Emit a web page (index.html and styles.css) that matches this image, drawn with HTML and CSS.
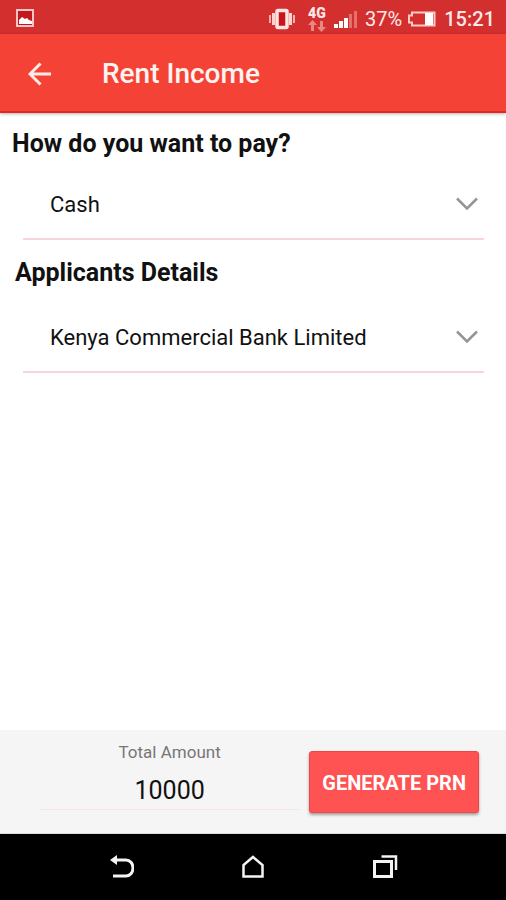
FILE: index.html
```html
<!DOCTYPE html>
<html lang="en">
<head>
<meta charset="utf-8">
<meta name="viewport" content="width=device-width, initial-scale=1">
<title>Rent Income</title>
<link rel="stylesheet" href="styles.css">
</head>
<body>
<div class="status">
  <svg class="status-picture" width="20" height="20" viewBox="0 0 20 20" aria-hidden="true">
    <rect x="1" y="1" width="16" height="16" fill="#c4161c" stroke="#fbc5c5" stroke-width="2"/>
    <path d="M3 15v-4l3-3 3 2 2-1 2 2 3 1v3z" fill="#fff"/>
  </svg>
  <svg class="status-vibrate" width="28" height="22" viewBox="0 0 28 22" aria-hidden="true">
    <rect x="9" y="2.500" width="10" height="17" rx="1" fill="#c4161c" stroke="#ffe3e0" stroke-width="3.500"/>
    <path d="M5.500 5v12M22.500 5v12" stroke="#fbd3d0" stroke-width="3"/>
    <path d="M2 7v8M26 7v8" stroke="#f3b0ae" stroke-width="2"/>
  </svg>
  <div class="network">
    <span class="network-type">4G</span>
    <svg width="18" height="12" viewBox="0 0 18 12" aria-hidden="true">
      <path d="M4.500 0l4.500 5H6v6H3V5H0zM13.500 12L9 7h3V1h3v6h3z" fill="#e98783"/>
    </svg>
  </div>
  <svg class="status-signal" width="24" height="18" viewBox="0 0 24 18" aria-hidden="true">
    <path d="M0 14h4v4H0zM5 11h4v7H5zM10 8h4v10h-4z" fill="#fff"/>
    <path d="M15 4h3v14h-3zM20 1h3v17h-3z" fill="#e4706e"/>
  </svg>
  <span class="battery-level">37%</span>
  <svg class="status-battery" width="28" height="16" viewBox="0 0 28 16" aria-hidden="true">
    <path d="M4 1.500h22.500v13H4v-3H1v-7h3z" fill="none" stroke="#fbc9c7" stroke-width="2"/>
    <path d="M17 2h8v12h-8z" fill="#fff"/>
  </svg>
  <span class="clock">15:21</span>
</div>

<header class="app-bar">
  <button class="back" type="button" aria-label="Back">
    <svg width="24" height="24" viewBox="0 0 24 24" aria-hidden="true">
      <path d="M23 12H2.500M12.500 1.500L2 12l10.500 10.500" fill="none" stroke="#ffece9" stroke-width="3"/>
    </svg>
  </button>
  <h1>Rent Income</h1>
</header>

<main>
  <label class="heading" for="method">How do you want to pay?</label>
  <div class="field">
    <select id="method"><option>Cash</option></select>
    <svg class="chevron" width="22" height="14" viewBox="0 0 22 14" aria-hidden="true"><path d="M1 1.500l10 10 10-10" fill="none" stroke="#959595" stroke-width="2.500"/></svg>
  </div>
  <label class="heading heading-details" for="bank">Applicants Details</label>
  <div class="field">
    <select id="bank"><option>Kenya Commercial Bank Limited</option></select>
    <svg class="chevron" width="22" height="14" viewBox="0 0 22 14" aria-hidden="true"><path d="M1 1.500l10 10 10-10" fill="none" stroke="#959595" stroke-width="2.500"/></svg>
  </div>
</main>

<footer class="summary">
  <div class="total">
    <label for="amount">Total Amount</label>
    <input id="amount" type="text" value="10000">
  </div>
  <button class="generate" type="button">GENERATE PRN</button>
</footer>

<nav class="system-nav">
  <button type="button" aria-label="System back">
    <svg width="26" height="26" viewBox="0 0 26 26" aria-hidden="true">
      <path d="M7 6h11a7 8 0 0 1 0 16H5" fill="none" stroke="#f4f4f4" stroke-width="3"/>
      <path d="M2 6l7-5v10z" fill="#f4f4f4"/>
    </svg>
  </button>
  <button type="button" aria-label="Home">
    <svg width="26" height="26" viewBox="0 0 26 26" aria-hidden="true">
      <path d="M3.500 22.500V11L13 3 22.500 11v11.500z" fill="none" stroke="#f4f4f4" stroke-width="2.500"/>
    </svg>
  </button>
  <button type="button" aria-label="Recent apps">
    <svg width="26" height="26" viewBox="0 0 26 26" aria-hidden="true">
      <path d="M2.500 7.500h17v15h-17z" fill="none" stroke="#f4f4f4" stroke-width="3"/>
      <path d="M9.500 2.500H24V16" fill="none" stroke="#f4f4f4" stroke-width="2.500"/>
    </svg>
  </button>
</nav>
</body>
</html>
```
FILE: styles.css
```css
* {
  box-sizing: border-box;
}

body {
  display: flex;
  flex-direction: column;
  min-height: 100vh;
  margin: 0;
  background: #fff;
  color: #111;
  font-family: Roboto, "Liberation Sans", sans-serif;
}

button,
input,
select {
  margin: 0;
  padding: 0;
  border: 0;
  background: none;
  color: inherit;
  font: inherit;
}

svg {
  display: block;
  flex: none;
}

.status {
  display: flex;
  align-items: center;
  height: 34px;
  padding: 3px 11px 0 16px;
  background: #d32f2f;
  color: #ffe9e7;
  font-size: 20px;
}

.status-picture {
  margin-right: auto;
}

.status-vibrate {
  margin-right: 12px;
}

.network {
  margin-right: 8px;
}

.network-type {
  display: block;
  font-size: 14px;
  font-weight: 900;
  line-height: 14px;
}

.status-signal {
  margin-right: 7px;
}

.battery-level {
  margin-right: 6px;
}

.status-battery {
  margin-right: 8px;
}

.clock {
  font-weight: 500;
}

.app-bar {
  display: flex;
  align-items: center;
  height: 79px;
  padding: 3px 28px 0;
  border-bottom: 2px solid #e5281c;
  background: #f44336;
  box-shadow: 0 1px 3px rgba(0, 0, 0, 0.3);
  color: #fff3f1;
}

.back {
  margin-right: 50px;
}

h1 {
  margin: 0;
  font-size: 28px;
  font-weight: 500;
  line-height: 32px;
}

main {
  flex: 1;
  padding: 15px 22px 0 12px;
}

.heading {
  display: block;
  font-size: 25px;
  font-weight: 700;
  line-height: 32px;
}

.heading-details {
  margin-top: 17px;
  padding: 0 0 4px 3px;
}

.field {
  display: grid;
  align-items: center;
  height: 80px;
  margin-left: 11px;
  border-bottom: 2px solid #fad4da;
}

.field select,
.chevron {
  grid-area: 1 / 1;
}

.field select {
  width: 100%;
  height: 100%;
  padding: 10px 36px 0 27px;
  appearance: none;
  font-size: 22px;
}

.chevron {
  justify-self: end;
  margin: 10px 6px 0 0;
  pointer-events: none;
}

.summary {
  display: flex;
  align-items: flex-start;
  gap: 10px;
  height: 104px;
  padding: 12px 27px 0 40px;
  border-bottom: 1px solid #dcdcdc;
  background: #f5f5f5;
}

.total {
  flex: 1;
  min-width: 0;
  text-align: center;
}

.total label {
  display: block;
  color: #777;
  font-size: 17px;
  line-height: 20px;
}

.total input {
  display: block;
  width: 100%;
  height: 48px;
  padding-top: 10px;
  border-bottom: 1px solid #fae3e5;
  font-size: 25px;
  text-align: center;
}

.generate {
  height: 62px;
  margin-top: 9px;
  padding: 2px 12px 0;
  border: 1px solid #f24444;
  border-radius: 3px;
  background: #ff5252;
  box-shadow: 0 2px 3px rgba(0, 0, 0, 0.35);
  color: #fff;
  font-size: 20px;
  font-weight: 700;
}

.system-nav {
  display: flex;
  justify-content: center;
  gap: 106px;
  height: 66px;
  background: #000;
}
```
